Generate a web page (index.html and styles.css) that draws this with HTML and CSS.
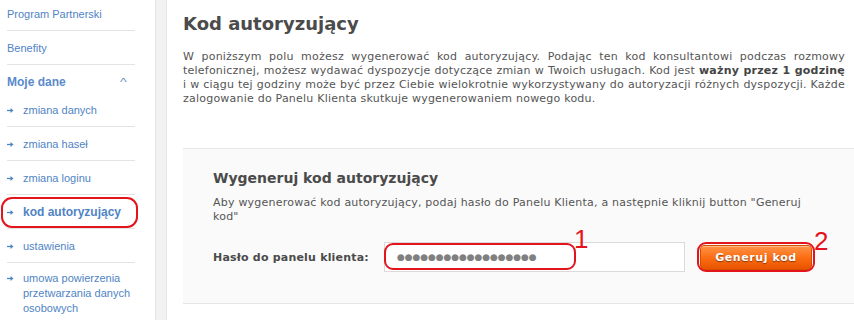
FILE: index.html
```html
<!DOCTYPE html>
<html lang="pl">
<head>
  <meta charset="UTF-8" />
  <title>Kod autoryzujący</title>
  <link rel="stylesheet" href="styles.css">
</head>
<body>
  <div class="layout">
    <ul class="menu">
      <li class="first"><a href="#">Program Partnerski</a></li>
      <li><a href="#">Benefity</a></li>
      <li class="group">Moje dane <span class="caret">^</span></li>
      <li class="sub"><a href="#"><svg class="arrow" width="16" height="15" viewBox="0 0 16 15"><path d="M0 7.5H4.5" stroke="#4f84c4" stroke-width="1.3"/><path d="M3.5 5L6.5 7.5L3.5 10Z" fill="#4f84c4"/></svg>zmiana danych</a></li>
      <li class="sub"><a href="#"><svg class="arrow" width="16" height="15" viewBox="0 0 16 15"><path d="M0 7.5H4.5" stroke="#4f84c4" stroke-width="1.3"/><path d="M3.5 5L6.5 7.5L3.5 10Z" fill="#4f84c4"/></svg>zmiana haseł</a></li>
      <li class="sub"><a href="#"><svg class="arrow" width="16" height="15" viewBox="0 0 16 15"><path d="M0 7.5H4.5" stroke="#4f84c4" stroke-width="1.3"/><path d="M3.5 5L6.5 7.5L3.5 10Z" fill="#4f84c4"/></svg>zmiana loginu</a></li>
      <li class="sub active"><a href="#"><svg class="arrow" width="16" height="15" viewBox="0 0 16 15"><path d="M0 7.5H4.5" stroke="#4f84c4" stroke-width="1.3"/><path d="M3.5 5L6.5 7.5L3.5 10Z" fill="#4f84c4"/></svg>kod autoryzujący</a></li>
      <li class="sub"><a href="#"><svg class="arrow" width="16" height="15" viewBox="0 0 16 15"><path d="M0 7.5H4.5" stroke="#4f84c4" stroke-width="1.3"/><path d="M3.5 5L6.5 7.5L3.5 10Z" fill="#4f84c4"/></svg>ustawienia</a></li>
      <li class="sub"><a href="#"><svg class="arrow" width="16" height="15" viewBox="0 0 16 15"><path d="M0 7.5H4.5" stroke="#4f84c4" stroke-width="1.3"/><path d="M3.5 5L6.5 7.5L3.5 10Z" fill="#4f84c4"/></svg><span>umowa powierzenia przetwarzania danych osobowych</span></a></li>
    </ul>
    <div class="gutter"></div>
    <div class="main">
      <h1>Kod autoryzujący</h1>
      <p class="intro">W poniższym polu możesz wygenerować kod autoryzujący. Podając ten kod konsultantowi podczas rozmowy telefonicznej, możesz wydawać dyspozycje dotyczące zmian w Twoich usługach. Kod jest <strong>ważny przez 1 godzinę</strong> i w ciągu tej godziny może być przez Ciebie wielokrotnie wykorzystywany do autoryzacji różnych dyspozycji. Każde zalogowanie do Panelu Klienta skutkuje wygenerowaniem nowego kodu.</p>

      <div class="box">
        <h2>Wygeneruj kod autoryzujący</h2>
        <p class="hint">Aby wygenerować kod autoryzujący, podaj hasło do Panelu Klienta, a następnie kliknij button "Generuj kod"</p>
        <form class="row">
          <label for="haslo">Hasło do panelu klienta:</label>
          <input id="haslo" class="pass" type="text" value="●●●●●●●●●●●●●●●●●●" readonly>
          <button type="button">Generuj kod</button>
        </form>
      </div>
    </div>
  </div>

  <!-- adnotacje -->
  <div class="mark mark-menu"></div>
  <div class="mark mark-input"></div>
  <div class="mark mark-button"></div>
  <div class="num num-1">1</div>
  <div class="num num-2">2</div>
</body>
</html>
```

FILE: styles.css
```css
body {
  margin: 0;
  background: #fff;
  font-family: "DejaVu Sans", Verdana, sans-serif;
  color: #555;
  overflow: hidden;
}

.layout {
  display: flex;
  height: 320px;
}

/* menu boczne */
.menu {
  width: 155px;
  margin: 0;
  padding: 0;
  list-style: none;
  font-family: "Liberation Sans", Arial, sans-serif;
  font-size: 11px;
  line-height: 15px;
}

.menu li {
  margin: 0 20px 0 7px;
  padding: 10px 0 8px;
  border-bottom: 1px solid #e4e4e4;
}

.menu li.first {
  padding-top: 7px;
}

.menu a {
  color: #4f84c4;
  text-decoration: none;
  display: flex;
}

.menu .group {
  border-bottom: none;
  padding-bottom: 3px;
  font-weight: bold;
  font-size: 12px;
  color: #5a8acb;
  display: flex;
  justify-content: space-between;
}

.caret {
  font-weight: normal;
  font-size: 11px;
  color: #6a8fbf;
  padding-right: 8px;
  transform: scaleX(1.3);
}

.menu .arrow {
  flex: none;
}

.menu .active a {
  font-weight: bold;
  font-size: 12px;
}

.menu li:last-child {
  border-bottom: none;
  padding-top: 8px;
}

.gutter {
  width: 10px;
  background: #f2f2f2;
  border-left: 1px solid #e3e3e3;
  border-right: 1px solid #e6e6e6;
}

/* tresc */
.main {
  flex: 1;
  padding-left: 16px;
}

h1 {
  margin: 12px 0 0;
  font-size: 18px;
  line-height: 24px;
  color: #4b4b4b;
}

.intro {
  margin: 14px 9px 0 0;
  font-size: 11px;
  line-height: 14px;
  letter-spacing: 0.22px;
  text-align: justify;
}

.intro strong {
  color: #444;
}

.box {
  margin-top: 42px;
  background: #fafafa;
  border-top: 1px solid #e6e6e6;
  border-bottom: 1px solid #e6e6e6;
  padding: 19px 30px 31px;
}

h2 {
  margin: 0;
  font-size: 14px;
  line-height: 20px;
  color: #4b4b4b;
}

.hint {
  margin: 8px 0 0;
  max-width: 595px;
  font-size: 11px;
  line-height: 14px;
  letter-spacing: 0.22px;
}

.row {
  margin-top: 18px;
  display: flex;
  align-items: center;
}

label {
  width: 171px;
  font-size: 11px;
  font-weight: bold;
  letter-spacing: 0.2px;
  color: #4b4b4b;
}

.pass {
  box-sizing: border-box;
  width: 301px;
  height: 30px;
  padding: 0 12px;
  border: 1px solid #dadada;
  background: #fff;
  color: #808080;
  font-family: "DejaVu Sans", sans-serif;
  font-size: 9px;
  letter-spacing: -0.1px;
  outline: none;
}

button {
  margin-left: 15px;
  width: 112px;
  height: 25px;
  background: linear-gradient(#ff9448, #fb6a10 55%, #e85400);
  border: 1px solid #d45000;
  border-radius: 4px;
  box-shadow: inset 0 1px 0 rgba(255,255,255,0.35);
  color: #fff;
  font-family: "DejaVu Sans", sans-serif;
  font-size: 11px;
  font-weight: bold;
  letter-spacing: 0.6px;
  text-shadow: 0 1px 1px rgba(0,0,0,0.45);
  cursor: pointer;
}

/* czerwone oznaczenia na zrzucie */
.mark {
  position: absolute;
  border: 2px solid #e3141c;
  border-radius: 9px;
  box-sizing: border-box;
}

.mark-menu {
  left: 1px;
  top: 197px;
  width: 137px;
  height: 31px;
  border-radius: 11px;
}

.mark-input {
  left: 384px;
  top: 243px;
  width: 192px;
  height: 27px;
}

.mark-button {
  left: 697px;
  top: 242px;
  width: 118px;
  height: 30px;
}

.num {
  position: absolute;
  color: #e3141c;
  font-family: "Liberation Sans", Arial, sans-serif;
  font-size: 26px;
  line-height: 26px;
}

.num-1 {
  left: 574px;
  top: 226px;
}

.num-2 {
  left: 814px;
  top: 228px;
}
```
